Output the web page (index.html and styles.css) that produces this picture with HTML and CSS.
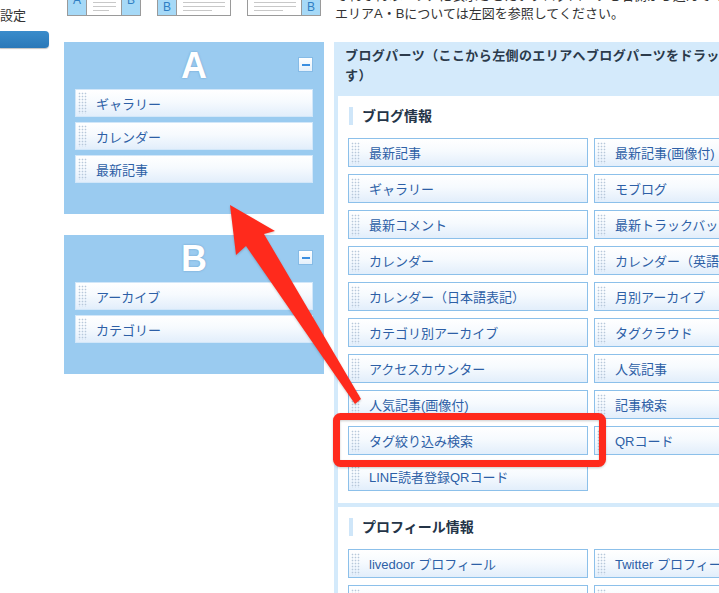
FILE: index.html
```html
<!DOCTYPE html>
<html lang="ja">
<head>
<meta charset="utf-8">
<title>ブログパーツ設定</title>
<link rel="stylesheet" href="styles.css">
</head>
<body>
<div class="page">
  <aside class="side">
    <div class="side-label">設定</div>
    <div class="side-btn"></div>
  </aside>
  <main class="content">
    <div class="topbar">
      <div class="thumbs">
        <div class="thumb">
          <div class="tcol blue up">A</div>
          <div class="tcol white"><i></i><i></i><i class="short"></i></div>
          <div class="tcol blue up">B</div>
        </div>
        <div class="thumb">
          <div class="tcol blue">B</div>
          <div class="tcol white wide"><i></i><i></i><i class="short"></i></div>
        </div>
        <div class="thumb">
          <div class="tcol white wide"><i></i><i></i><i class="short"></i></div>
          <div class="tcol blue">B</div>
        </div>
      </div>
      <p class="note">それぞれのエリアに表示させたいブログパーツを右側から選んでください。<br>エリアA・Bについては左図を参照してください。</p>
    </div>
    <div class="panels">
      <div class="areas">
        <section class="area">
          <div class="area-head"><span class="area-letter">A</span><span class="minus"></span></div>
          <ul class="area-list">
            <li class="part light"><span class="grip"></span>ギャラリー</li>
            <li class="part light"><span class="grip"></span>カレンダー</li>
            <li class="part light"><span class="grip"></span>最新記事</li>
          </ul>
        </section>
        <section class="area">
          <div class="area-head"><span class="area-letter">B</span><span class="minus"></span></div>
          <ul class="area-list">
            <li class="part light"><span class="grip"></span>アーカイブ</li>
            <li class="part light"><span class="grip"></span>カテゴリー</li>
          </ul>
        </section>
      </div>
      <div class="parts">
        <div class="parts-head">ブログパーツ（ここから左側のエリアへブログパーツをドラッグ＆ドロップしま<br>す）</div>
        <section class="group">
          <h2 class="group-title">ブログ情報</h2>
          <ul class="grid">
            <li class="part"><span class="grip"></span>最新記事</li>
            <li class="part"><span class="grip"></span>最新記事(画像付)</li>
            <li class="part"><span class="grip"></span>ギャラリー</li>
            <li class="part"><span class="grip"></span>モブログ</li>
            <li class="part"><span class="grip"></span>最新コメント</li>
            <li class="part"><span class="grip"></span>最新トラックバック</li>
            <li class="part"><span class="grip"></span>カレンダー</li>
            <li class="part"><span class="grip"></span>カレンダー（英語表記）</li>
            <li class="part"><span class="grip"></span>カレンダー（日本語表記）</li>
            <li class="part"><span class="grip"></span>月別アーカイブ</li>
            <li class="part"><span class="grip"></span>カテゴリ別アーカイブ</li>
            <li class="part"><span class="grip"></span>タグクラウド</li>
            <li class="part"><span class="grip"></span>アクセスカウンター</li>
            <li class="part"><span class="grip"></span>人気記事</li>
            <li class="part"><span class="grip"></span>人気記事(画像付)</li>
            <li class="part"><span class="grip"></span>記事検索</li>
            <li class="part"><span class="grip"></span>タグ絞り込み検索</li>
            <li class="part"><span class="grip"></span>QRコード</li>
            <li class="part"><span class="grip"></span>LINE読者登録QRコード</li>
          </ul>
        </section>
        <section class="group">
          <h2 class="group-title">プロフィール情報</h2>
          <ul class="grid">
            <li class="part"><span class="grip"></span>livedoor プロフィール</li>
            <li class="part"><span class="grip"></span>Twitter プロフィール</li>
            <li class="part"><span class="grip"></span>プロフィール</li>
            <li class="part"><span class="grip"></span>フォロー</li>
          </ul>
        </section>
      </div>
    </div>
  </main>
  <svg class="annot" width="719" height="593" viewBox="0 0 719 593" aria-hidden="true">
    <rect x="336.5" y="416.5" width="266" height="47" rx="4" ry="4" fill="none" stroke="#ff2a1c" stroke-width="7"/>
    <polygon points="230,205 275,231 264,234 361,399 355,404 246,246 236,255" fill="#ff2a1c"/>
  </svg>
</div>
</body>
</html>
```
FILE: styles.css
```css
* { box-sizing: border-box; }
html, body { margin: 0; padding: 0; }
body {
  width: 719px;
  height: 593px;
  overflow: hidden;
  background: #fff;
  font-family: "Liberation Sans", "Noto Sans CJK JP", sans-serif;
  font-size: 13px;
  color: #333;
}
.page {
  position: relative;
  display: flex;
  width: 719px;
  height: 593px;
}
.side {
  width: 64px;
  flex-shrink: 0;
}
.side-label {
  height: 31px;
  padding-top: 8px;
  line-height: 16px;
  font-size: 13px;
  color: #333;
}
.side-btn {
  width: 49px;
  height: 17px;
  background: linear-gradient(#3a8ccb, #2a78b8);
  border-radius: 0 4px 4px 0;
  box-shadow: 0 1px 1px rgba(0,0,0,0.25);
}
.content {
  flex: 1;
  min-width: 0;
}
.topbar {
  display: flex;
  height: 42px;
  overflow: hidden;
}
.thumbs {
  width: 270px;
  flex-shrink: 0;
  display: flex;
  gap: 16px;
  padding-left: 3px;
}
.thumb {
  display: flex;
  width: 74px;
  height: 16px;
  border: 1px solid #9a9a9a;
  border-top: 0;
  overflow: hidden;
}
.tcol {
  height: 15px;
}
.tcol.blue {
  width: 18px;
  flex-shrink: 0;
  background: #a6d9f7;
  color: #2f7fc3;
  font-size: 12px;
  line-height: 14px;
  text-align: center;
}
.tcol.up { line-height: 0; }
.tcol.white {
  flex: 1;
  background: #fff;
  border-left: 1px solid #9a9a9a;
  border-right: 1px solid #9a9a9a;
  padding: 2px 5px 0 6px;
  display: flex;
  flex-direction: column;
  gap: 3px;
}
.thumb .tcol.white.wide:first-child { border-left: 0; }
.thumb .tcol.white.wide:last-child { border-right: 0; }
.tcol.white i {
  display: block;
  height: 1px;
  background: #c8c8c8;
}
.tcol.white i.short { width: 70%; }
.note {
  margin: -13px 0 0 1px;
  line-height: 18px;
  font-size: 13px;
  color: #333;
  white-space: nowrap;
}
.panels {
  display: flex;
  gap: 10px;
  align-items: flex-start;
}
.areas {
  width: 260px;
  flex-shrink: 0;
  display: flex;
  flex-direction: column;
  gap: 21px;
}
.area {
  background: #9acbf0;
  padding: 0 11px 31px;
}
.area-head {
  display: grid;
  grid-template-columns: 1fr auto 1fr;
  height: 47px;
}
.area-letter {
  grid-column: 2;
  font-family: "Liberation Sans", sans-serif;
  font-weight: bold;
  font-size: 36px;
  line-height: 47px;
  color: #fff;
  text-shadow: 0 0 2px rgba(70,120,170,0.6);
}
.minus {
  grid-column: 3;
  justify-self: end;
  align-self: start;
  margin-top: 15px;
  width: 15px;
  height: 15px;
  border: 1px solid #86bbe6;
  background: linear-gradient(#ffffff, #e4f0fb);
  display: flex;
  align-items: center;
  justify-content: center;
}
.minus::before {
  content: "";
  width: 8px;
  height: 2px;
  background: #3a8ee0;
}
ul {
  list-style: none;
  margin: 0;
  padding: 0;
}
.area-list {
  display: flex;
  flex-direction: column;
  gap: 5px;
}
.part {
  display: flex;
  align-items: center;
  height: 29px;
  border: 1px solid #8cc0ea;
  background: linear-gradient(#ffffff 0%, #f6fafe 45%, #e2eefb 100%);
  color: #2d5fa6;
  font-size: 13px;
  white-space: nowrap;
  overflow: hidden;
}
.part.light {
  height: 28px;
  border-color: #d2e7f9;
}
.grip {
  width: 9px;
  height: 22px;
  margin: 0 9px 0 2px;
  flex-shrink: 0;
  background-image: radial-gradient(circle, #b7c8da 0.7px, transparent 1.1px);
  background-size: 3px 3px;
}
.parts {
  width: 540px;
  flex-shrink: 0;
  background: #d4eafb;
}
.parts-head {
  padding: 4px 11px 10px;
  font-weight: bold;
  font-size: 13px;
  letter-spacing: 0.4px;
  line-height: 20px;
  color: #2b3a4b;
  white-space: nowrap;
}
.group {
  background: #fff;
  margin: 0 0 4px 4px;
  padding: 11px 0 12px 10px;
}
.group-title {
  margin: 0 0 13px 1px;
  height: 18px;
  border-left: 4px solid #cfe6f9;
  padding-left: 9px;
  font-size: 14px;
  font-weight: bold;
  line-height: 18px;
  color: #243447;
}
.grid {
  display: grid;
  grid-template-columns: 240px 240px;
  column-gap: 6px;
  row-gap: 7px;
}
.annot {
  position: absolute;
  left: 0;
  top: 0;
  pointer-events: none;
  filter: drop-shadow(0 1px 1px rgba(0,0,0,0.2));
}
```
